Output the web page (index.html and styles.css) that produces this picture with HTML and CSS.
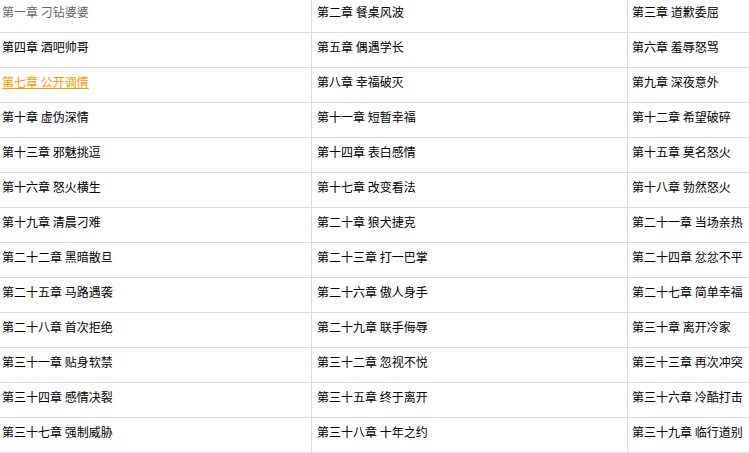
FILE: index.html
```html
<!DOCTYPE html>
<html lang="zh-CN">
<head>
<meta charset="utf-8">
<title>目录</title>
<link rel="stylesheet" href="styles.css">
</head>
<body>
<ul class="chapters">
  <li class="cell c1"><a class="visited" href="#">第一章 刁钻婆婆</a></li>
  <li class="cell c2"><a href="#">第二章 餐桌风波</a></li>
  <li class="cell c3"><a href="#">第三章 道歉委屈</a></li>
  <li class="cell c1"><a href="#">第四章 酒吧帅哥</a></li>
  <li class="cell c2"><a href="#">第五章 偶遇学长</a></li>
  <li class="cell c3"><a href="#">第六章 羞辱怒骂</a></li>
  <li class="cell c1"><a class="hover" href="#">第七章 公开调情</a></li>
  <li class="cell c2"><a href="#">第八章 幸福破灭</a></li>
  <li class="cell c3"><a href="#">第九章 深夜意外</a></li>
  <li class="cell c1"><a href="#">第十章 虚伪深情</a></li>
  <li class="cell c2"><a href="#">第十一章 短暂幸福</a></li>
  <li class="cell c3"><a href="#">第十二章 希望破碎</a></li>
  <li class="cell c1"><a href="#">第十三章 邪魅挑逗</a></li>
  <li class="cell c2"><a href="#">第十四章 表白感情</a></li>
  <li class="cell c3"><a href="#">第十五章 莫名怒火</a></li>
  <li class="cell c1"><a href="#">第十六章 怒火横生</a></li>
  <li class="cell c2"><a href="#">第十七章 改变看法</a></li>
  <li class="cell c3"><a href="#">第十八章 勃然怒火</a></li>
  <li class="cell c1"><a href="#">第十九章 清晨刁难</a></li>
  <li class="cell c2"><a href="#">第二十章 狼犬捷克</a></li>
  <li class="cell c3"><a href="#">第二十一章 当场亲热</a></li>
  <li class="cell c1"><a href="#">第二十二章 黑暗散旦</a></li>
  <li class="cell c2"><a href="#">第二十三章 打一巴掌</a></li>
  <li class="cell c3"><a href="#">第二十四章 忿忿不平</a></li>
  <li class="cell c1"><a href="#">第二十五章 马路遇袭</a></li>
  <li class="cell c2"><a href="#">第二十六章 傲人身手</a></li>
  <li class="cell c3"><a href="#">第二十七章 简单幸福</a></li>
  <li class="cell c1"><a href="#">第二十八章 首次拒绝</a></li>
  <li class="cell c2"><a href="#">第二十九章 联手侮辱</a></li>
  <li class="cell c3"><a href="#">第三十章 离开冷家</a></li>
  <li class="cell c1"><a href="#">第三十一章 贴身软禁</a></li>
  <li class="cell c2"><a href="#">第三十二章 忽视不悦</a></li>
  <li class="cell c3"><a href="#">第三十三章 再次冲突</a></li>
  <li class="cell c1"><a href="#">第三十四章 感情决裂</a></li>
  <li class="cell c2"><a href="#">第三十五章 终于离开</a></li>
  <li class="cell c3"><a href="#">第三十六章 冷酷打击</a></li>
  <li class="cell c1"><a href="#">第三十七章 强制威胁</a></li>
  <li class="cell c2"><a href="#">第三十八章 十年之约</a></li>
  <li class="cell c3"><a href="#">第三十九章 临行道别</a></li>
</ul>
</body>
</html>
```

FILE: styles.css
```css
html, body {
  margin: 0;
  padding: 0;
  background: #fff;
  overflow: hidden;
}

.chapters {
  list-style: none;
  margin: -2px 0 0 0;
  padding: 0;
  display: grid;
  grid-template-columns: 312px 316px 1fr;
  font-family: "Noto Sans CJK SC", sans-serif;
  font-size: 12px;
}

.cell {
  height: 34px;
  line-height: 27px;
  border-bottom: 1px solid #dcdcdc;
  white-space: nowrap;
  overflow: hidden;
}

.c1 {
  padding-left: 2px;
  border-right: 1px solid #dcdcdc;
}

.c2 {
  padding-left: 5px;
  border-right: 1px solid #dcdcdc;
}

.c3 {
  padding-left: 4px;
}

.cell a {
  color: #000;
  text-decoration: none;
}

.cell a.visited {
  color: #666;
}

.cell a.hover {
  color: #ff9900;
  text-decoration: underline;
}
```
